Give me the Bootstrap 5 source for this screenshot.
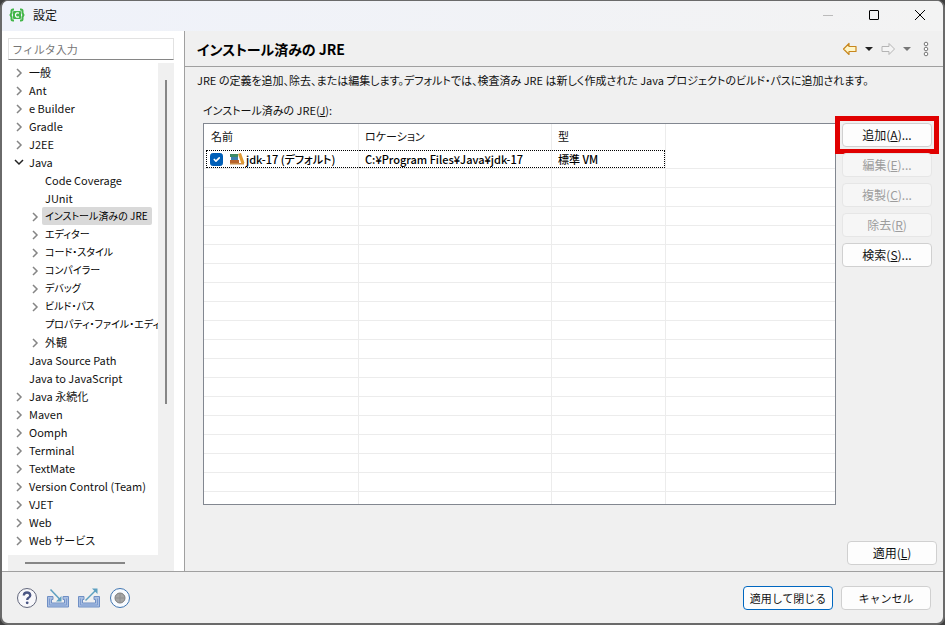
<!DOCTYPE html>
<html lang="ja">
<head>
<meta charset="utf-8">
<meta name="viewport" content="width=device-width, initial-scale=1">
<title>設定</title>
<link href="https://cdn.jsdelivr.net/npm/bootstrap@5.3.0/dist/css/bootstrap.min.css" rel="stylesheet">
<style>
  body { background: #3f3f3f; font-family: "Noto Sans CJK JP", sans-serif; font-feature-settings: "palt"; font-size: 11px; line-height: 18px; color: #111; }
  .dialog { background: #f0f0f0; border: solid #6a6a6a; border-width: 1px 2px 2px; border-radius: 8px; }
  .titlebar { height: 30px; background: linear-gradient(90deg, #eff2fa, #f3f3f3); padding: 0 0 3px 7px; font-size: 12px; }
  .win-btn { width: 46px; height: 26px; }
  .side { width: 183px; background: #fff; border-right: 1px solid #a0a0a0; padding: 7px 10px 0 6px; }
  .filter { height: 22px; border: 1px solid #e2e2e2; border-bottom-color: #868686; border-radius: 0; padding: 0 3px; font-size: 11px; line-height: 18px; min-height: 0; margin-bottom: 3px; }
  .filter::placeholder { color: #767676; }
  .scroll-v { width: 16px; background: #f0f0f0; padding: 17px 7px 0; }
  .thumb-v { width: 2px; height: 324px; background: #868686; }
  .scroll-h { height: 16px; background: #f0f0f0; padding: 7px 0 0 17px; }
  .thumb-h { width: 100px; height: 2px; background: #868686; }
  .tree li { height: 18px; white-space: nowrap; }
  .tree .twist { width: 21px; height: 18px; padding-left: 6px; flex: none; }
  .tree .kids .twist { margin-left: 16px; }
  .tree a { color: #111; }
  .tree .kana { font-size: 10px; color: #000; }
  .tree .chosen { background: #d9d9d9; border-radius: 2px; padding: 0 4px 0 3px; margin-left: -3px; }
  .plain { background: none; border: 0; padding: 0; color: inherit; }
  .page-head { height: 36px; border-bottom: 1px solid #a0a0a0; padding: 0 13px 0 12px; gap: 6px; }
  .page-head h1 { font-size: 14px; line-height: 20px; font-weight: 700; color: #000; }
  .page-main { padding: 4px 6px 6px 12px; }
  .list-label { padding-left: 6px; }
  .caption-row { margin: 12px 0 4px; }
  .list-area { padding: 0 5px 0 6px; min-height: 0; margin-bottom: 36px; }
  .grid-box { background: #fff; border: 1px solid #828790; }
  .grid { table-layout: fixed; width: 100%; border-collapse: separate; border-spacing: 0; }
  .grid th { height: 26px; font-weight: 400; padding: 0 6px 2px; }
  .grid th:first-child { padding-left: 7px; }
  .grid td { height: 19px; border-bottom: 1px solid #ececec; padding: 0; }
  .grid th, .grid td { border-right: 1px solid #ececec; line-height: 16px; white-space: nowrap; }
  .grid th:last-child, .grid td:last-child { border-right: 0; }
  .focus-cell { height: 18px; border: dotted #000; border-width: 1px 0; padding-left: 6px; font-weight: 500; color: #000; }
  .focus-start { border-left-width: 1px; margin-left: 2px; padding-left: 3px; }
  .focus-end { border-right-width: 1px; }
  .tick { width: 13px; height: 13px; margin: 0 6px 0 0; border-radius: 3px; flex: none; }
  .tick:checked { background-color: #005fb8; border-color: #005fb8; }
  .act { --bs-btn-font-size: 12px; --bs-btn-line-height: 18px; --bs-btn-padding-y: 2px; --bs-btn-padding-x: 4px; --bs-btn-border-radius: 4px; --bs-btn-color: #111; --bs-btn-bg: #fdfdfd; --bs-btn-border-color: #d0d0d0; --bs-btn-hover-bg: #e5f1fb; --bs-btn-hover-border-color: #0078d4; --bs-btn-disabled-color: #9d9d9d; --bs-btn-disabled-bg: #f6f6f6; --bs-btn-disabled-border-color: #e6e6e6; --bs-btn-disabled-opacity: 1; width: 90px; height: 24px; white-space: nowrap; }
  .foot .act { --bs-btn-font-size: 11px; }
  .act-main { --bs-btn-border-color: #0067c0; }
  .side-acts { width: 90px; margin-left: 6px; gap: 6px; }
  .callout { outline: 5px solid #e00000; outline-offset: 2px; }
  .foot { height: 52px; border-top: 1px solid #a0a0a0; padding: 0 12px 0 14px; }
  .tools { gap: 9px; }
</style>
<script src="https://cdn.jsdelivr.net/npm/bootstrap@5.3.0/dist/js/bootstrap.bundle.min.js"></script>
</head>
<body>
<svg class="d-none">
  <symbol id="closed" viewBox="0 0 10 18"><path d="M3 6l4 4-4 4" fill="none" stroke="#858585" stroke-width="1.5"/></symbol>
  <symbol id="opened" viewBox="0 0 10 18"><path d="M1 7l4 4 4-4" fill="none" stroke="#222" stroke-width="1.5"/></symbol>
</svg>
<div class="dialog vh-100 d-flex flex-column overflow-hidden">
  <header class="titlebar d-flex align-items-center flex-shrink-0">
    <svg width="16" height="14" viewBox="0 0 16 14" aria-hidden="true"><path d="M5 1.500H4Q2.500 1.500 2.500 3V5L1.500 7L2.500 9V11Q2.500 12.500 4 12.500H5M11 1.500H12Q13.500 1.500 13.500 3V5L14.500 7L13.500 9V11Q13.500 12.500 12 12.500H11" fill="none" stroke="#43b649" stroke-width="2"/><rect x="4" y="3" width="8" height="8" rx="1" fill="#43b649"/><path d="M10 5.200Q6.500 4 6.500 7T10 8.800" fill="none" stroke="#fff" stroke-width="1.300"/></svg>
    <span class="ms-2 me-auto">設定</span>
    <button class="plain win-btn d-flex align-items-center justify-content-center" type="button" aria-label="最小化" disabled><svg width="10" height="10"><path d="M0 5.500h10" stroke="#bbb"/></svg></button>
    <button class="plain win-btn d-flex align-items-center justify-content-center" type="button" aria-label="最大化"><svg width="10" height="10"><rect x=".5" y=".5" width="9" height="9" rx=".5" fill="none" stroke="#000"/></svg></button>
    <button class="plain win-btn d-flex align-items-center justify-content-center" type="button" aria-label="閉じる"><svg width="10" height="10"><path d="M0 0l10 10M10 0L0 10" stroke="#000"/></svg></button>
  </header>
  <div class="d-flex flex-grow-1 overflow-hidden">
    <nav class="side d-flex flex-column flex-shrink-0">
      <input class="filter form-control" type="text" placeholder="フィルタ入力" aria-label="フィルタ入力">
      <div class="d-flex flex-grow-1 overflow-hidden">
        <ul class="tree list-unstyled mb-0 flex-grow-1 overflow-hidden" id="tree"></ul>
        <div class="scroll-v flex-shrink-0"><div class="thumb-v"></div></div>
      </div>
      <div class="scroll-h flex-shrink-0"><div class="thumb-h"></div></div>
    </nav>
    <main class="d-flex flex-column flex-grow-1 overflow-hidden">
      <div class="page-head d-flex align-items-center flex-shrink-0">
        <h1 class="mb-0 me-auto">インストール済みの JRE</h1>
        <button class="plain d-flex" type="button" aria-label="戻る"><svg width="16" height="14"><path d="M1.500 7L7 1.500V4.500H14V9.500H7V12.500Z" fill="#fff6c8" stroke="#c8871e" stroke-width="1.200" stroke-linejoin="round"/></svg></button>
        <button class="plain d-flex" type="button" aria-label="戻る履歴"><svg width="10" height="6"><path d="M1 1h8L5 5z" fill="#222"/></svg></button>
        <button class="plain d-flex" type="button" aria-label="進む"><svg width="16" height="14"><path d="M14.500 7L9 1.500V4.500H2V9.500H9V12.500Z" fill="#f4f4f4" stroke="#b4b4b4" stroke-linejoin="round"/></svg></button>
        <button class="plain d-flex" type="button" aria-label="進む履歴"><svg width="10" height="6"><path d="M1 1h8L5 5z" fill="#777"/></svg></button>
        <button class="plain d-flex ms-1" type="button" aria-label="メニュー"><svg width="8" height="16"><g fill="#fff" stroke="#777"><circle cx="4" cy="3" r="1.800"/><circle cx="4" cy="8" r="1.800"/><circle cx="4" cy="13" r="1.800"/></g></svg></button>
      </div>
      <div class="page-main d-flex flex-column flex-grow-1 overflow-hidden">
        <p class="mb-0 text-nowrap">JRE の定義を追加、除去、または編集します。デフォルトでは、検査済み JRE は新しく作成された Java プロジェクトのビルド・パスに追加されます。</p>
        <p class="list-label caption-row" id="jre-label">インストール済みの JRE(<u>J</u>):</p>
        <div class="list-area d-flex flex-grow-1">
          <div class="grid-box flex-grow-1 overflow-hidden">
            <table class="grid" aria-labelledby="jre-label">
              <colgroup><col style="width:155px"><col style="width:193px"><col style="width:114px"><col></colgroup>
              <thead><tr><th>名前</th><th>ロケーション</th><th>型</th><th></th></tr></thead>
              <tbody id="rows"><tr>
                <td><div class="focus-cell focus-start d-flex align-items-center"><input class="form-check-input tick" type="checkbox" checked aria-label="jdk-17"><svg width="17" height="14" class="flex-shrink-0" aria-hidden="true"><path d="M1 2h8v3H1z" fill="#3d8a64"/><path d="M2 5h7v3H2z" fill="#3f7fae"/><path d="M1 8h9v3H1z" fill="#b8642c"/><path d="M1 11h14v1.500H1z" fill="#c98a48"/><path d="M9 2l3-1 3.500 10-3 1z" fill="#e09a32"/></svg><span>jdk-17 (デフォルト)</span></div></td>
                <td><div class="focus-cell">C:¥Program Files¥Java¥jdk-17</div></td><td><div class="focus-cell focus-end">標準 VM</div></td><td></td></tr></tbody>
            </table>
          </div>
          <div class="side-acts d-flex flex-column flex-shrink-0">
            <div class="callout d-flex"><button class="btn act" type="button">追加(<u>A</u>)...</button></div>
            <button class="btn act" type="button" disabled>編集(<u>E</u>)...</button>
            <button class="btn act" type="button" disabled>複製(<u>C</u>)...</button>
            <button class="btn act" type="button" disabled>除去(<u>R</u>)</button>
            <button class="btn act" type="button">検索(<u>S</u>)...</button>
          </div>
        </div>
        <div class="d-flex justify-content-end"><button class="btn act" type="button">適用(<u>L</u>)</button></div>
      </div>
    </main>
  </div>
  <footer class="foot d-flex align-items-center flex-shrink-0">
    <div class="tools d-flex me-auto">
      <button class="plain d-flex" type="button" aria-label="ヘルプ"><svg width="22" height="22"><circle cx="11" cy="11" r="9.500" fill="#f8f8fb" stroke="#62677c"/><path d="M7.800 8.500Q8 5.500 11 5.500T14.300 8.300Q14.300 10 12.300 11Q11.200 11.700 11.200 13" fill="none" stroke="#4a5684" stroke-width="2.300"/><circle cx="11.200" cy="15.800" r="1.400" fill="#4a5684"/></svg></button>
      <button class="plain d-flex" type="button" aria-label="インポート"><svg width="22" height="22"><path d="M.5 9.500H6V12.500H4.500V16H17.500V12.500H16V9.500H21.500V20H.5Z" fill="#a9bfe2" stroke="#6f8fc4"/><path d="M2.500 11.500V18H19.500V11.500" fill="none" stroke="#7d9bd0"/><path d="M3.500 2.500L13 12.500" stroke="#5d9fc0" stroke-width="1.500"/><path d="M14.500 14.500V9L9 14.500Z" fill="#5d9fc0"/></svg></button>
      <button class="plain d-flex" type="button" aria-label="エクスポート"><svg width="22" height="22"><path d="M.5 9.500H6V12.500H4.500V16H17.500V12.500H16V9.500H21.500V20H.5Z" fill="#a9bfe2" stroke="#6f8fc4"/><path d="M2.500 11.500V18H19.500V11.500" fill="none" stroke="#7d9bd0"/><path d="M7.500 13.500L17.500 3.500" stroke="#5d9fc0" stroke-width="1.500"/><path d="M19.500 1.500V7L14 1.500Z" fill="#5d9fc0"/></svg></button>
      <button class="plain d-flex" type="button" aria-label="記録"><svg width="22" height="22"><circle cx="11" cy="11" r="9.500" fill="#f8fbff" stroke="#3f74b0"/><circle cx="11" cy="11" r="5" fill="#a5a5a5" stroke="#7c7c7c"/><path d="M7 11h8M11 7v8" stroke="#8f8f8f"/></svg></button>
    </div>
    <button class="btn act act-main me-2" type="button">適用して閉じる</button>
    <button class="btn act" type="button">キャンセル</button>
  </footer>
</div>
<script>
  const items = ['>一般','>Ant','>e Builder','>Gradle','>J2EE','vJava','- Code Coverage','- JUnit','->インストール済みの JRE','->エディター','->コード・スタイル','->コンパイラー','->デバッグ','->ビルド・パス','- プロパティ・ファイル・エディ','->外観',' Java Source Path',' Java to JavaScript','>Java 永続化','>Maven','>Oomph','>Terminal','>TextMate','>Version Control (Team)','>VJET','>Web','>Web サービス'];
  document.getElementById('tree').innerHTML = items.map(t => {
    const kid = t[0] === '-', s = kid ? t.slice(1) : t, name = s.slice(1);
    const icon = s[0] === ' ' ? '<span class="twist"></span>' : `<button class="plain twist d-flex" type="button" aria-label="${name}"><svg width="10" height="18"><use href="#${s[0] === 'v' ? 'opened' : 'closed'}"/></svg></button>`;
    const kana = /^[ァ-ヶ]/.test(name) ? ' kana' : '';
    return `<li class="d-flex${kid ? ' kids' : ''}">${icon}<a href="#" class="text-decoration-none${kana}${name.startsWith('インスト') ? ' chosen' : ''}">${name}</a></li>`;
  }).join('');
  document.getElementById('rows').insertAdjacentHTML('beforeend', '<tr><td></td><td></td><td></td><td></td></tr>'.repeat(30));
</script>
</body>
</html>
